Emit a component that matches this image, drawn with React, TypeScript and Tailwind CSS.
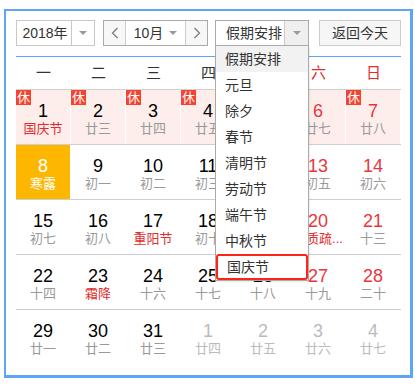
import React from "react";

type Day = {
  d: number;
  l: string;
  red?: boolean;
  lred?: boolean;
  rest?: boolean;
  today?: boolean;
  other?: boolean;
};

const weeks: Day[][] = [
  [
    { d: 1, l: "国庆节", lred: true, rest: true },
    { d: 2, l: "廿三", rest: true },
    { d: 3, l: "廿四", rest: true },
    { d: 4, l: "廿五", rest: true },
    { d: 5, l: "廿六", rest: true },
    { d: 6, l: "廿七", red: true, rest: true },
    { d: 7, l: "廿八", red: true, rest: true },
  ],
  [
    { d: 8, l: "寒露", today: true },
    { d: 9, l: "初一" },
    { d: 10, l: "初二" },
    { d: 11, l: "初三" },
    { d: 12, l: "初四" },
    { d: 13, l: "初五", red: true },
    { d: 14, l: "初六", red: true },
  ],
  [
    { d: 15, l: "初七" },
    { d: 16, l: "初八" },
    { d: 17, l: "重阳节", lred: true },
    { d: 18, l: "初十" },
    { d: 19, l: "十一" },
    { d: 20, l: "骨质疏...", red: true, lred: true },
    { d: 21, l: "十三", red: true },
  ],
  [
    { d: 22, l: "十四" },
    { d: 23, l: "霜降", lred: true },
    { d: 24, l: "十六" },
    { d: 25, l: "十七" },
    { d: 26, l: "十八" },
    { d: 27, l: "十九", red: true },
    { d: 28, l: "二十", red: true },
  ],
  [
    { d: 29, l: "廿一" },
    { d: 30, l: "廿二" },
    { d: 31, l: "廿三" },
    { d: 1, l: "廿四", other: true },
    { d: 2, l: "廿五", other: true },
    { d: 3, l: "廿六", other: true },
    { d: 4, l: "廿七", other: true },
  ],
];

const weekdays = ["一", "二", "三", "四", "五", "六", "日"];
const holidays = ["假期安排", "元旦", "除夕", "春节", "清明节", "劳动节", "端午节", "中秋节", "国庆节"];

function Caret() {
  return <div className="w-0 h-0 border-l-[4px] border-r-[4px] border-t-[4px] border-l-transparent border-r-transparent border-t-[#999]" />;
}

function DayCell({ day }: { day: Day }) {
  let bg = "bg-white";
  if (day.rest) bg = "bg-[#fdeeec]";
  if (day.today) bg = "bg-[#fdb700]";

  let num = "text-black";
  if (day.red) num = "text-[#e8363c]";
  if (day.other) num = "text-[#bbb]";
  if (day.today) num = "text-white";

  let lunar = "text-[#999]";
  if (day.lred) lunar = "text-[#e42a2a]";
  if (day.other) lunar = "text-[#bbb]";
  if (day.today) lunar = "text-white";

  return (
    <div className={`relative w-[55px] h-full border-r border-white flex flex-col items-center pt-[11px] ${bg}`}>
      {day.rest && (
        <div className="absolute left-0 top-0 w-[15px] h-[15px] bg-[#f4432f] text-white text-[13px] leading-[15px] text-center">
          休
        </div>
      )}
      <div className={`text-[18px] leading-[20px] ${num}`}>{day.d}</div>
      <div className={`w-full px-px text-center whitespace-nowrap overflow-hidden text-[13px] leading-[16px] ${lunar}`}>{day.l}</div>
    </div>
  );
}

export default function App() {
  return (
    <div className="w-[415px] h-[387px] bg-white pt-[9px] pl-[4px] [font-family:'Liberation_Sans','Noto_Sans_CJK_SC',sans-serif] text-[#333]">
      <div className="w-[409px] h-[369px] border-l-2 border-t-2 border-r-[3px] border-b-[3px] border-[#5ca6f5] pl-[10px] pr-[9px] pt-[9px]">
        {/* toolbar */}
        <div className="flex h-[26px] text-[14px]">
          <div className="w-[79px] flex border border-[#c8c8c8]">
            <div className="flex-1 flex items-center justify-center pl-[2px]">2018年</div>
            <div className="w-[23px] flex items-center justify-center border-l border-[#c8c8c8]">
              <Caret />
            </div>
          </div>

          <div className="ml-[8px] w-[105px] flex border border-[#aaa]">
            <div className="w-[22px] flex items-center justify-center bg-[#f7f7f7] border-r border-[#ccc]">
              <svg width="8" height="12" viewBox="0 0 8 12">
                <polyline points="6.5,1 1.5,6 6.5,11" fill="none" stroke="#777" strokeWidth="1.2" />
              </svg>
            </div>
            <div className="flex-1 flex items-center justify-center gap-[6px]">
              <span>10月</span>
              <Caret />
            </div>
            <div className="w-[22px] flex items-center justify-center bg-[#f7f7f7] border-l border-[#ccc]">
              <svg width="8" height="12" viewBox="0 0 8 12">
                <polyline points="1.5,1 6.5,6 1.5,11" fill="none" stroke="#777" strokeWidth="1.2" />
              </svg>
            </div>
          </div>

          <div className="relative ml-[7px] w-[94px] flex border border-[#aaa]">
            <div className="flex-1 flex items-center pl-[10px]">假期安排</div>
            <div className="w-[24px] flex items-center justify-center bg-[#efefef] border-l border-[#ccc]">
              <Caret />
            </div>
            <div className="absolute left-[-1px] top-[24px] w-[94px] border border-[#aaa] bg-white z-10 shadow-[1px_1px_2px_rgba(0,0,0,0.08)]">
              {holidays.map((h, i) => (
                <div
                  key={h}
                  className={`h-[26px] flex items-center pl-[9px] ${i === 0 ? "bg-[#f2f2f2]" : ""} ${
                    i === holidays.length - 1 ? "border-2 border-[#ff2419] rounded-[3px] pl-[7px]" : ""
                  }`}
                >
                  {h}
                </div>
              ))}
            </div>
          </div>

          <div className="ml-[10px] w-[82px] flex items-center justify-center border border-[#ccc] bg-[#f6f6f6]">
            返回今天
          </div>
        </div>

        <div className="mt-[10px] h-px bg-[#5ca6f5]" />

        {/* weekdays */}
        <div className="flex h-[32px] items-center text-[15px]">
          {weekdays.map((w, i) => (
            <div key={w} className={`w-[55px] text-center ${i >= 5 ? "text-[#e42a2a]" : "text-[#333]"}`}>
              {w}
            </div>
          ))}
        </div>

        {/* grid */}
        {weeks.map((row, ri) => (
          <div key={ri} className="flex h-[55px] border-t border-[#cfcfcf]">
            {row.map((day, ci) => (
              <DayCell key={ci} day={day} />
            ))}
          </div>
        ))}
      </div>
    </div>
  );
}
